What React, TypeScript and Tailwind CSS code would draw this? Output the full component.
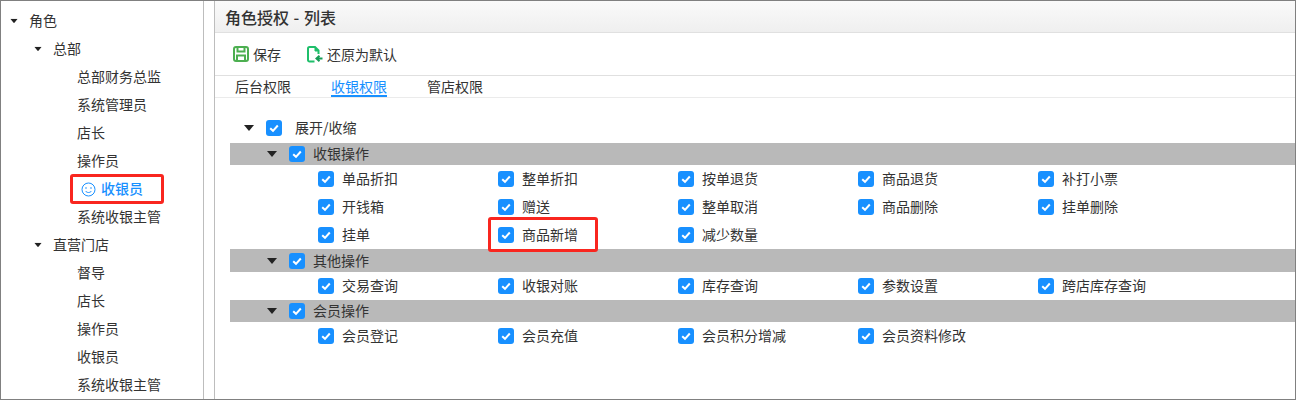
const font = { fontFamily: '"Noto Sans CJK SC", "Liberation Sans", sans-serif' };

function Caret({ className = "" }: { className?: string }) {
  return (
    <svg width="10" height="6" viewBox="0 0 10 6" className={className}>
      <path d="M0 0H10L5 6Z" fill="#222" />
    </svg>
  );
}

function Check() {
  return (
    <span className="flex h-4 w-4 shrink-0 items-center justify-center rounded-[3px] bg-[#1890ff]">
      <svg width="12" height="10" viewBox="0 0 12 10">
        <path d="M2.200 5.200l2.800 2.600 4.800-5.300" fill="none" stroke="#fff" strokeWidth="2" />
      </svg>
    </span>
  );
}

function TreeRow({ label, level, caret, active }: { label: string; level: 0 | 1 | 2; caret?: boolean; active?: boolean }) {
  const pad = level === 0 ? "pl-[8px]" : level === 1 ? "pl-[32px]" : active ? "pl-[80px]" : "pl-[76px]";
  return (
    <div className={`relative flex h-7 items-center whitespace-nowrap text-sm ${pad} ${active ? "font-medium text-[#1890ff]" : "text-[#333]"}`}>
      {caret && <Caret className="mr-[10px] scale-75" />}
      {active && (
        <svg width="15" height="15" viewBox="0 0 15 15" className="mr-[5px]">
          <circle cx="7.5" cy="7.5" r="6.5" fill="none" stroke="#1890ff" strokeWidth="1" />
          <circle cx="5" cy="6" r=".8" fill="#1890ff" />
          <circle cx="10" cy="6" r=".8" fill="#1890ff" />
          <path d="M4.5 9c1.500 2 4.500 2 6 0" fill="none" stroke="#1890ff" />
        </svg>
      )}
      <span className="pb-[2px]">{label}</span>
      {active && <span className="absolute left-[69px] top-[-1px] h-[30px] w-[94px] rounded-[3px] border-[3px] border-[#f9261f]" />}
    </div>
  );
}

function Section({ title, rows, tall }: { title: string; rows: string[][]; tall?: boolean }) {
  return (
    <div>
      <div className={`flex items-center bg-[#b9b9b9] pl-[37px] text-sm text-[#333] ${tall ? "h-[23px]" : "h-[22px]"}`}>
        <Caret />
        <span className="ml-3"><Check /></span>
        <span className="ml-2 pb-[2px]">{title}</span>
      </div>
      <div>
        {rows.map((row, i) => (
          <div key={i} className="flex h-7 items-center pl-[88px] text-sm text-[#333]">
            {row.map((c) => (
              <div key={c} className="relative flex w-[180px] shrink-0 items-center gap-2">
                <Check />
                <span className="pb-[2px]">{c}</span>
                {c === "商品新增" && <span className="absolute left-[-10px] top-[-7px] h-[35px] w-[110px] rounded-[3px] border-[3px] border-[#f9261f]" />}
              </div>
            ))}
          </div>
        ))}
      </div>
    </div>
  );
}

export default function App() {
  return (
    <div style={font} className="flex h-[400px] w-[1296px] overflow-hidden border border-[#808080] bg-white">
      <div className="w-[203px] shrink-0 border-r border-[#bdbdbd] pt-[6px]">
        <TreeRow label="角色" level={0} caret />
        <TreeRow label="总部" level={1} caret />
        <TreeRow label="总部财务总监" level={2} />
        <TreeRow label="系统管理员" level={2} />
        <TreeRow label="店长" level={2} />
        <TreeRow label="操作员" level={2} />
        <TreeRow label="收银员" level={2} active />
        <TreeRow label="系统收银主管" level={2} />
        <TreeRow label="直营门店" level={1} caret />
        <TreeRow label="督导" level={2} />
        <TreeRow label="店长" level={2} />
        <TreeRow label="操作员" level={2} />
        <TreeRow label="收银员" level={2} />
        <TreeRow label="系统收银主管" level={2} />
      </div>
      <div className="ml-[10px] min-w-0 flex-1 border-l border-[#bdbdbd]">
        <div className="flex h-8 items-center border-b border-[#e0e0e0] bg-gradient-to-b from-[#fafafa] to-[#efefef] pl-[10px] text-base font-medium text-[#333] [word-spacing:1px]">
          角色授权 - 列表
        </div>
        <div className="flex h-[43px] items-center border-b border-[#e0e0e0] pl-[18px] text-sm text-[#333]">
          <svg width="16" height="16" viewBox="0 0 16 16" className="mr-[4px]">
            <rect x="1" y="1" width="14" height="14" rx="2" fill="none" stroke="#4caf50" strokeWidth="2" />
            <path d="M4.500 1v4.500h7V1M4 15V9.500h8V15" fill="none" stroke="#4caf50" strokeWidth="2" />
          </svg>
          <span>保存</span>
          <svg width="17" height="17" viewBox="0 0 17 17" className="ml-[26px] mr-[3px]">
            <path d="M7.500 15.500H2.500A1.500 1.500 0 0 1 1 14V2.500A1.500 1.500 0 0 1 2.500 1H8l3.500 3.500V8" fill="none" stroke="#1fbf6b" strokeWidth="2" />
            <path d="M8 1v4h4" fill="#1fbf6b" stroke="#1fbf6b" />
            <path d="M15.500 12.500h-5M12.500 9.800l-3 2.700 3 2.700" fill="none" stroke="#169c56" strokeWidth="2" />
          </svg>
          <span>还原为默认</span>
        </div>
        <div className="flex h-[22px] border-b border-[#ebebeb] pl-5 text-[14px] text-[#333]">
          <span className="h-[21px] leading-[21px]">后台权限</span>
          <span className="ml-10 h-[21px] border-b-2 border-[#1890ff] leading-[21px] text-[#1890ff]">收银权限</span>
          <span className="ml-10 h-[21px] leading-[21px]">管店权限</span>
        </div>
        <div className="pl-[15px] pt-[20px]">
          <div className="flex h-[20px] items-center pl-[14px] text-sm text-[#333]">
            <Caret />
            <span className="ml-3"><Check /></span>
            <span className="ml-[13px] pb-[2px]">展开/收缩</span>
          </div>
          <div className="mt-[5px]">
            <Section title="收银操作" rows={[["单品折扣", "整单折扣", "按单退货", "商品退货", "补打小票"], ["开钱箱", "赠送", "整单取消", "商品删除", "挂单删除"], ["挂单", "商品新增", "减少数量"]]} />
            <Section title="其他操作" tall rows={[["交易查询", "收银对账", "库存查询", "参数设置", "跨店库存查询"]]} />
            <Section title="会员操作" rows={[["会员登记", "会员充值", "会员积分增减", "会员资料修改"]]} />
          </div>
        </div>
      </div>
    </div>
  );
}
